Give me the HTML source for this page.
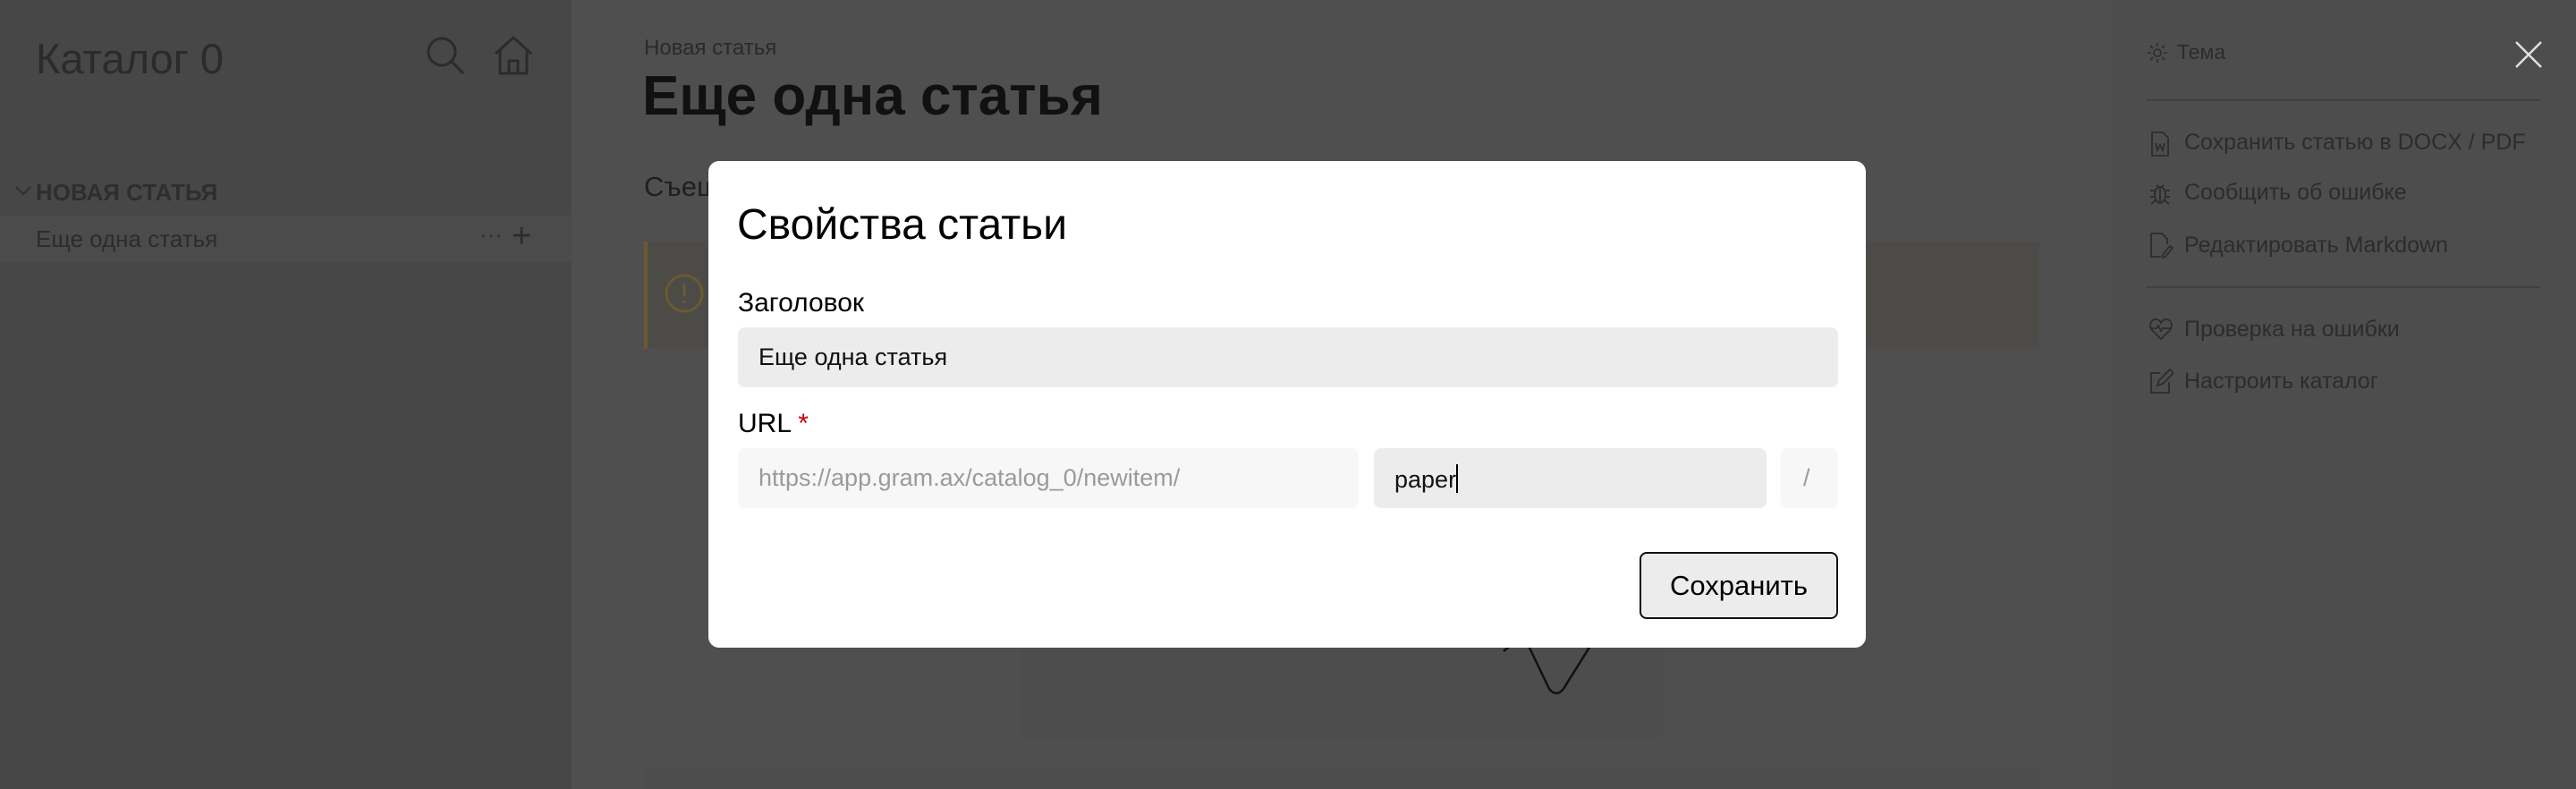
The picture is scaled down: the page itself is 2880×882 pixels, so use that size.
<!DOCTYPE html>
<html><head><meta charset="utf-8"><style>
*{box-sizing:border-box;margin:0;padding:0}
body{width:2880px;height:882px;overflow:hidden;background:#4f4f4f;font-family:"Liberation Sans","Noto Sans CJK SC",sans-serif;position:relative}
.abs{position:absolute;white-space:nowrap}
.side{left:0;top:0;width:639px;height:882px;background:#474747}
.right{left:2362px;top:0;width:518px;height:882px;background:#4d4d4d}
.ri{position:absolute;left:2442px;font-size:25px;color:#2c2c2c;line-height:30px}
.ic{position:absolute;left:2402px}
.modal{left:792px;top:180px;width:1294px;height:544px;background:#fff;border-radius:12px}
</style></head><body>
<div class="abs side"></div>
<div class="abs right"></div>
<!-- sidebar -->
<div class="abs" style="left:40px;top:38px;font-size:47px;color:#2b2b2b">Каталог 0</div>
<svg class="abs" style="left:474px;top:38px" width="48" height="48" viewBox="0 0 48 48" fill="none" stroke="#2b2b2b" stroke-width="3"><circle cx="20" cy="20" r="15"/><path d="M31 31l13 13"/></svg>
<svg class="abs" style="left:550px;top:38px" width="48" height="48" viewBox="0 0 48 48" fill="none" stroke="#2b2b2b" stroke-width="3" stroke-linejoin="round"><path d="M4 22L24 4l20 18M9 18v26h30V18M19 44V30h10v14"/></svg>
<svg class="abs" style="left:16px;top:206px" width="20" height="14" viewBox="0 0 20 14" fill="none" stroke="#2e2e2e" stroke-width="2"><path d="M2 3l8 8 8-8"/></svg>
<div class="abs" style="left:40px;top:200px;font-size:26px;color:#2e2e2e;font-weight:bold">НОВАЯ СТАТЬЯ</div>
<div class="abs" style="left:0;top:241px;width:639px;height:51px;background:#4b4b4b"></div>
<div class="abs" style="left:40px;top:252px;font-size:26px;color:#2c2c2c">Еще одна статья</div>
<div class="abs" style="left:536px;top:247px;font-size:26px;color:#2c2c2c">···</div>
<div class="abs" style="left:572px;top:243px;font-size:38px;color:#2c2c2c;font-weight:300">+</div>
<!-- main -->
<div class="abs" style="left:720px;top:40px;font-size:24px;color:#2a2a2a">Новая статья</div>
<div class="abs" style="left:718px;top:72px;font-size:62px;font-weight:bold;color:#111">Еще одна статья</div>
<div class="abs" style="left:720px;top:191px;font-size:31px;color:#1f1f1f">Съеш</div>
<div class="abs" style="left:720px;top:270px;width:1560px;height:120px;background:#4c4b48;border-left:4px solid #6b5a30"></div>
<svg class="abs" style="left:742px;top:305px" width="46" height="46" viewBox="0 0 46 46" fill="none" stroke="#6b5a30" stroke-width="3"><circle cx="23" cy="23" r="20"/><path d="M23 12v14M23 31v3"/></svg>
<div class="abs" style="left:1139px;top:700px;width:722px;height:125px;background:#4d4d4d;border-radius:8px"></div>
<svg class="abs" style="left:1680px;top:700px" width="140" height="80" viewBox="0 0 140 80" fill="none" stroke="#111" stroke-width="2.5"><path d="M28 0 C24 8 24 14 28 20 L52 70 Q60 80 68 70 L98 22 C104 14 104 8 100 0"/><path d="M1 28 L18 14 L10 20Z" fill="#111"/></svg>
<div class="abs" style="left:720px;top:857px;width:1560px;height:25px;background:#4d4d4d"></div>
<!-- right panel -->
<svg class="abs" style="left:2400px;top:47px" width="24" height="24" viewBox="0 0 24 24" fill="none" stroke="#2c2c2c" stroke-width="1.6"><circle cx="12" cy="12" r="4"/><path d="M12 1v4M12 19v4M1 12h4M19 12h4M4 4l3 3M17 17l3 3M4 20l3-3M17 7l3-3"/></svg>
<div class="ri" style="left:2434px;top:43px;font-size:23px">Тема</div>
<svg class="abs" style="left:2810px;top:44px" width="34" height="34" viewBox="0 0 34 34" stroke="#e0e0e0" stroke-width="2.5"><path d="M3 3l28 28M31 3L3 31"/></svg>
<div class="abs" style="left:2400px;top:111px;width:440px;height:2px;background:#3f3f3f"></div>
<svg class="ic" style="top:146px" width="26" height="30" viewBox="0 0 26 30" fill="none" stroke="#2c2c2c" stroke-width="1.8"><path d="M4 2h12l6 6v20H4z"/><path d="M8 14l2 8 3-6 3 6 2-8"/></svg>
<div class="ri" style="top:144px">Сохранить статью в DOCX / PDF</div>
<svg class="ic" style="top:201px" width="26" height="30" viewBox="0 0 26 30" fill="none" stroke="#2c2c2c" stroke-width="1.8"><ellipse cx="13" cy="17" rx="6" ry="9"/><path d="M9 6l4 3 4-3M2 12h5M19 12h5M2 19h5M19 19h5M3 27l5-4M23 27l-5-4M13 10v16"/></svg>
<div class="ri" style="top:200px">Сообщить об ошибке</div>
<svg class="ic" style="top:259px" width="28" height="30" viewBox="0 0 28 30" fill="none" stroke="#2c2c2c" stroke-width="1.8"><path d="M14 28H3V2h12l6 6v6"/><path d="M16 26l8-10 3 2-8 10-3 1z"/></svg>
<div class="ri" style="top:259px">Редактировать Markdown</div>
<div class="abs" style="left:2400px;top:320px;width:440px;height:2px;background:#3f3f3f"></div>
<svg class="ic" style="top:354px" width="28" height="28" viewBox="0 0 28 28" fill="none" stroke="#2c2c2c" stroke-width="1.8"><path d="M14 25L4 15C0 10 3 3 8 3c3 0 5 2 6 4 1-2 3-4 6-4 5 0 8 7 4 12z"/><path d="M2 13h7l2-3 3 6 2-3h10"/></svg>
<div class="ri" style="top:353px">Проверка на ошибки</div>
<svg class="ic" style="top:411px" width="28" height="30" viewBox="0 0 28 30" fill="none" stroke="#2c2c2c" stroke-width="1.8"><path d="M13 6H3v22h20V16"/><path d="M10 20l2-6L24 2l4 4-12 12z"/></svg>
<div class="ri" style="top:411px">Настроить каталог</div>
<!-- modal -->
<div class="abs modal"></div>
<div class="abs" style="left:824px;top:224px;font-size:48px;color:#000">Свойства статьи</div>
<div class="abs" style="left:825px;top:322px;font-size:30px;color:#000">Заголовок</div>
<div class="abs" style="left:825px;top:366px;width:1230px;height:67px;background:#ececec;border-radius:8px"></div>
<div class="abs" style="left:848px;top:384px;font-size:27px;color:#111">Еще одна статья</div>
<div class="abs" style="left:825px;top:457px;font-size:30px;color:#000">URL <span style="color:#c00">*</span></div>
<div class="abs" style="left:825px;top:501px;width:694px;height:67px;background:#f7f7f7;border-radius:8px"></div>
<div class="abs" style="left:848px;top:519px;font-size:27px;color:#9a9a9a">https://app.gram.ax/catalog_0/newitem/</div>
<div class="abs" style="left:1536px;top:501px;width:439px;height:67px;background:#ececec;border-radius:8px"></div>
<div class="abs" style="left:1559px;top:519px;font-size:27px;color:#111">paper<span style="display:inline-block;width:2px;height:32px;background:#000;vertical-align:-6px"></span></div>
<div class="abs" style="left:1991px;top:501px;width:64px;height:67px;background:#f7f7f7;border-radius:8px"></div>
<div class="abs" style="left:2016px;top:519px;font-size:27px;color:#9a9a9a">/</div>
<div class="abs" style="left:1833px;top:617px;width:222px;height:75px;background:#ececec;border:2px solid #111;border-radius:8px;font-size:31px;color:#000;text-align:center;line-height:71px">Сохранить</div>
</body></html>
